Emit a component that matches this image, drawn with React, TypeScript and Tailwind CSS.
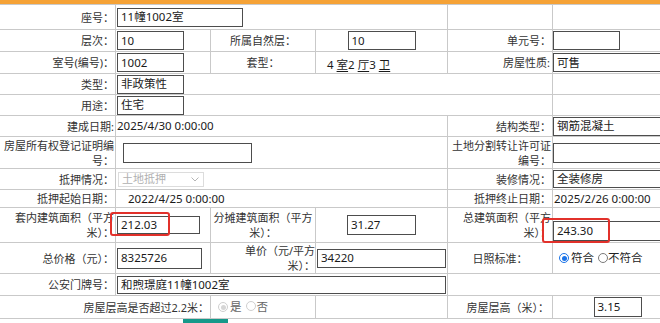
import type { ReactNode } from 'react'

const cell = 'border border-[#c9c9c9] p-0'
const label = `${cell} text-right text-[11px] leading-[15px] text-[#333]`

function Field({ className = '', children }: { className?: string; children?: ReactNode }) {
  return (
    <div
      className={`border border-[#4d4d4d] pl-[3px] text-[11.5px] text-[#1a1a1a] whitespace-nowrap overflow-hidden flex items-center ${className}`}
    >
      {children}
    </div>
  )
}

function Radio({ checked, disabled }: { checked?: boolean; disabled?: boolean }) {
  const ring = disabled ? 'border-[#cfcfcf]' : checked ? 'border-[#1a73e8]' : 'border-[#7a7a7a]'
  const dot = disabled ? 'bg-[#d6d6d6]' : 'bg-[#1a73e8]'
  return (
    <span className={`inline-flex w-[10px] h-[10px] rounded-full border ${ring} items-center justify-center`}>
      {checked && <span className={`w-[5px] h-[5px] rounded-full ${dot}`} />}
    </span>
  )
}

export default function App() {
  return (
    <div className="relative w-[660px] h-[323px] overflow-hidden bg-white font-['Noto_Sans','Noto_Sans_CJK_SC',sans-serif] text-[#333]">
      <div className="h-[4px] bg-[#f5a236]" />

      <table className="table-fixed border-collapse w-[682px] -ml-[1px]">
        <colgroup>
          <col className="w-[116px]" />
          <col className="w-[95px]" />
          <col className="w-[105px]" />
          <col className="w-[132px]" />
          <col className="w-[105px]" />
          <col className="w-[130px]" />
        </colgroup>
        <tbody>
          {/* 座号 */}
          <tr className="h-[25px]">
            <td className={`${label} pr-[1px]`}>座号：</td>
            <td className={`${cell} px-[1px]`} colSpan={3}>
              <Field className="w-[126px] h-[19px]">11幢1002室</Field>
            </td>
            <td className={cell} />
            <td className={cell} />
          </tr>

          {/* 层次 */}
          <tr className="h-[22px]">
            <td className={`${label} pr-[1px]`}>层次：</td>
            <td className={`${cell} px-[1px]`}>
              <Field className="w-[67px] h-[19px]">10</Field>
            </td>
            <td className={`${label} !text-center`}>所属自然层：</td>
            <td className={cell}>
              <Field className="w-[68px] h-[19px] mx-auto">10</Field>
            </td>
            <td className={`${label} pr-[1px]`}>单元号：</td>
            <td className={cell}>
              <Field className="w-[67px] h-[19px]" />
            </td>
          </tr>

          {/* 室号 */}
          <tr className="h-[22px]">
            <td className={`${label} pr-[1px]`}>室号(编号)：</td>
            <td className={`${cell} px-[1px]`}>
              <Field className="w-[67px] h-[19px]">1002</Field>
            </td>
            <td className={`${label} !text-center`}>套型：</td>
            <td className={`${cell} align-bottom pl-[11px] pb-[1px] text-[11.5px] leading-[15px] text-[#1a1a1a]`}>
              4 <span className="underline underline-offset-2">室</span>2 <span className="underline underline-offset-2">厅</span>3{' '}
              <span className="underline underline-offset-2">卫</span>
            </td>
            <td className={`${label} pr-[2px]`}>房屋性质:</td>
            <td className={cell}>
              <Field className="w-[140px] h-[19px] pl-[2px]">可售</Field>
            </td>
          </tr>

          {/* 类型 */}
          <tr className="h-[21px]">
            <td className={`${label} pr-[1px]`}>类型：</td>
            <td className={`${cell} px-[1px]`} colSpan={4}>
              <Field className="w-[67px] h-[19px]">非政策性</Field>
            </td>
            <td className={cell} />
          </tr>

          {/* 用途 */}
          <tr className="h-[21px]">
            <td className={`${label} pr-[1px]`}>用途：</td>
            <td className={`${cell} px-[1px]`} colSpan={4}>
              <Field className="w-[67px] h-[19px]">住宅</Field>
            </td>
            <td className={cell} />
          </tr>

          {/* 建成日期 */}
          <tr className="h-[21px]">
            <td className={`${label} pr-[1px]`}>建成日期:</td>
            <td className={`${cell} pl-[1px] text-[11.5px] text-[#1a1a1a]`} colSpan={3}>
              2025/4/30 0:00:00
            </td>
            <td className={`${label} pr-[1px]`}>结构类型：</td>
            <td className={cell}>
              <Field className="w-[140px] h-[19px] pl-[2px]">钢筋混凝土</Field>
            </td>
          </tr>

          {/* 登记证明编号 */}
          <tr className="h-[32px]">
            <td className={`${label} pr-[1px]`}>房屋所有权登记证明编号：</td>
            <td className={cell} colSpan={3}>
              <Field className="w-[129px] h-[20px] ml-[7px]" />
            </td>
            <td className={`${label} pr-[1px]`}>土地分割转让许可证编号：</td>
            <td className={cell}>
              <Field className="w-[140px] h-[20px]" />
            </td>
          </tr>

          {/* 抵押情况 */}
          <tr className="h-[21px]">
            <td className={`${label} pr-[1px]`}>抵押情况：</td>
            <td className={`${cell} px-[2px]`} colSpan={3}>
              <div className="w-[86px] h-[15px] border border-[#dcdcdc] flex items-center justify-between pl-[3px] pr-[4px] text-[11px] text-[#b0b0b0]">
                土地抵押
                <svg width="8" height="5" viewBox="0 0 8 5" fill="none" stroke="#b5b5b5" strokeWidth="1">
                  <path d="M0.5 0.5 L4 4 L7.5 0.5" />
                </svg>
              </div>
            </td>
            <td className={`${label} pr-[1px]`}>装修情况：</td>
            <td className={cell}>
              <Field className="w-[140px] h-[18px] pl-[2px]">全装修房</Field>
            </td>
          </tr>

          {/* 抵押日期 */}
          <tr className="h-[18px]">
            <td className={`${label} pr-[1px]`}>抵押起始日期：</td>
            <td className={`${cell} pl-[12px] text-[11.5px] leading-[15px] text-[#1a1a1a]`} colSpan={3}>
              2022/4/25 0:00:00
            </td>
            <td className={`${label} pr-[1px]`}>抵押终止日期：</td>
            <td className={`${cell} pl-[1px] text-[11.5px] leading-[15px] text-[#1a1a1a]`}>2025/2/26 0:00:00</td>
          </tr>

          {/* 面积 */}
          <tr className="h-[35px]">
            <td className={`${label} pr-[1px]`}>套内建筑面积（平方米）：</td>
            <td className={`${cell} px-[1px]`}>
              <Field className="w-[83px] h-[18px]">212.03</Field>
            </td>
            <td className={`${label} !text-center`}>分摊建筑面积（平方米）：</td>
            <td className={cell}>
              <Field className="w-[69px] h-[20px] mx-auto">31.27</Field>
            </td>
            <td className={`${label} pr-[1px]`}>总建筑面积（平方米）：</td>
            <td className={`${cell} align-bottom pb-[1px]`}>
              <Field className="w-[140px] h-[20px] pl-[2px]">243.30</Field>
            </td>
          </tr>

          {/* 价格 */}
          <tr className="h-[31px]">
            <td className={`${label} pr-[1px]`}>总价格（元）：</td>
            <td className={`${cell} px-[1px]`}>
              <Field className="w-[85px] h-[21px]">8325726</Field>
            </td>
            <td className={`${label} pr-0`}>
              单价（元/平方
              <br />
              米）：
            </td>
            <td className={`${cell} px-[1px]`}>
              <Field className="w-[129px] h-[19px]">34220</Field>
            </td>
            <td className={`${label} !text-center`}>日照标准：</td>
            <td className={`${cell} pl-[6px]`}>
              <div className="flex items-center text-[11.5px] text-[#222]">
                <Radio checked />
                <span className="ml-[2px]">符合</span>
                <span className="ml-[4px] flex items-center">
                  <Radio />
                  <span>不符合</span>
                </span>
              </div>
            </td>
          </tr>

          {/* 门牌号 */}
          <tr className="h-[22px]">
            <td className={`${label} pr-[1px]`}>公安门牌号：</td>
            <td className={`${cell} px-[1px]`} colSpan={3}>
              <Field className="w-[329px] h-[18px]">和煦璟庭11幢1002室</Field>
            </td>
            <td className={cell} colSpan={2} />
          </tr>

          {/* 层高 */}
          <tr className="h-[23px]">
            <td className={`${label} pr-[1px]`} colSpan={2}>
              房屋层高是否超过2.2米：
            </td>
            <td className={`${cell} pl-[7px]`}>
              <div className="flex items-center text-[11.5px] text-[#666]">
                <Radio checked disabled />
                <span className="ml-[2px]">是</span>
                <span className="ml-[4px]">
                  <Radio disabled />
                </span>
                <span className="ml-[1px]">否</span>
              </div>
            </td>
            <td className={cell} />
            <td className={`${label} pr-[3px]`}>房屋层高（米）：</td>
            <td className={cell}>
              <Field className="w-[48px] h-[20px] mx-auto">3.15</Field>
            </td>
          </tr>
        </tbody>
      </table>

      <div className="ml-[183px] w-[45px] h-[8px] bg-[#16998a]" />

      {/* red highlight marks */}
      <div className="absolute left-[110px] top-[212px] w-[60px] h-[24px] border-2 border-[#e2312b] rounded-[3px]" />
      <div className="absolute left-[542px] top-[218px] w-[68px] h-[25px] border-2 border-[#e2312b] rounded-[3px]" />
    </div>
  )
}
